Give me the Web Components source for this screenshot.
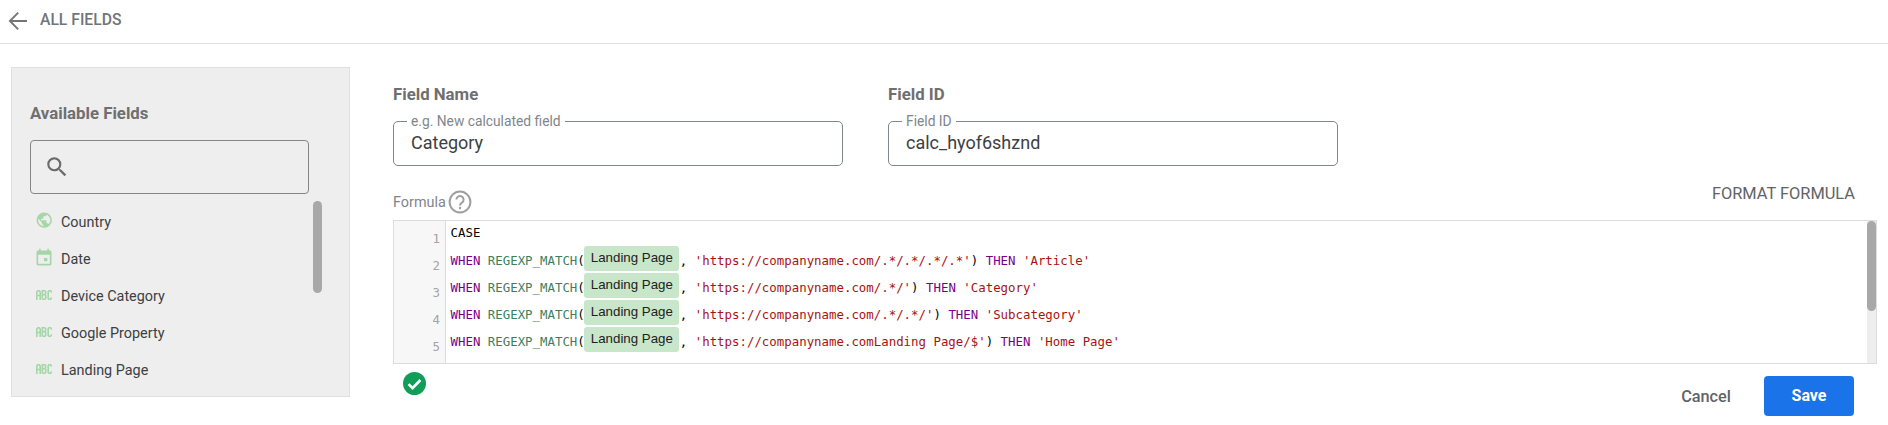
<!DOCTYPE html>
<html><head><meta charset="utf-8">
<style>
html,body{margin:0;padding:0;background:#fff;overflow:hidden}
body{width:1888px;height:425px;font-family:Roboto,sans-serif}
</style></head><body>
<app-topbar>ALL FIELDS</app-topbar>
<app-main>
  <fields-panel slot="left"></fields-panel>
  <field-editor slot="right"></field-editor>
</app-main>
<script>
function def(name,html){
  customElements.define(name,class extends HTMLElement{
    connectedCallback(){
      if(this.shadowRoot)return;
      const s=this.attachShadow({mode:'open'});
      s.innerHTML=typeof html==='function'?html(this):html;
    }
  });
}
def('app-topbar',`<style>
:host{display:flex;align-items:center;height:43px;border-bottom:1px solid #e0e0e0;color:#70757a;font:500 15.7px/38px Roboto,sans-serif}
svg{margin-left:8px;margin-right:12px;display:block;margin-top:-1px}
.t{display:block;margin-top:-4px}
</style><svg width="20" height="20" viewBox="0 0 20 20"><path d="M19 10H2.5M10.2 1.6 1.9 10l8.3 8.4" fill="none" stroke="#757575" stroke-width="1.9"/></svg><span class="t"><slot></slot></span>`);
def('app-main',`<style>
:host{display:flex;padding-top:23px;align-items:flex-start}
::slotted([slot=left]){margin-left:11px}
::slotted([slot=right]){margin-left:43px}
</style><slot name="left"></slot><slot name="right"></slot>`);
const globe=`<svg width="18.4" height="18.4" viewBox="0 0 24 24" style="margin-left:-1.5px"><path fill="#a5d6a7" d="M12 2a10 10 0 1 0 0 20 10 10 0 0 0 0-20zm-1 17.93A8 8 0 0 1 4 12c0-.62.08-1.21.21-1.79L9 15v1a2 2 0 0 0 2 2v1.93zm6.9-2.54A2 2 0 0 0 16 16h-1v-3a1 1 0 0 0-1-1H8v-2h2a1 1 0 0 0 1-1V7h2a2 2 0 0 0 2-2v-.41A8 8 0 0 1 17.9 17.39z"/></svg>`;
const cal=`<svg width="20" height="20" viewBox="0 0 24 24" style="margin-left:-2.5px"><path fill="#a5d6a7" d="M16 12h-4v4h4v-4zM16 1v2H8V1H6v2H5a2 2 0 0 0-2 2v14a2 2 0 0 0 2 2h14a2 2 0 0 0 2-2V5a2 2 0 0 0-2-2h-1V1h-2zm3 18H5V8h14v11z"/></svg>`;
const abc=`<svg width="16" height="10" viewBox="0 0 16 10"><g fill="none" stroke="#a5d6a7" stroke-width="1.6"><path d="M.8 10V2L1.8.8h1.4L4.2 2v8M.8 5.5h3.4"/><path d="M6.3 9.2V.8h2.4l.9.9v2l-.8.9H6.3M8.8 4.6l.9.9v2.8l-.9.9H6.3"/><path d="M15.4 2.8V1.7L14.6.8h-1.5l-.9.9v6.6l.9.9h1.5l.8-.9V7.2"/></g></svg>`;
def('field-item',h=>`<style>
:host{display:flex;align-items:center;height:37px;font:14.4px Roboto,sans-serif;color:#3c4043}
.i{width:25px;flex:none;display:flex;align-items:center;height:20px;margin-top:-3px}
svg{display:block;flex:none}
</style><span class="i">${{globe,cal,abc}[h.getAttribute('icon')]}</span><slot></slot>`);
def('fields-panel',`<style>
:host{display:block;width:337px;height:328px;background:#eee;border:1px solid #e0e0e0;position:relative}
h3{margin:0;padding:36px 0 0 18px;font:700 16.8px/18px Roboto,sans-serif;color:#6f6f6f}
.search{margin:18px 0 0 18px;width:277px;height:52px;border:1px solid #858585;border-radius:4px;display:flex;align-items:center}
.search svg{margin-left:13px;display:block}
.list{padding:9.5px 0 0 24px}
.sb{position:absolute;left:301px;top:133px;width:9px;height:92px;border-radius:5px;background:#a8a8a8}
</style><h3>Available Fields</h3>
<div class="search"><svg width="26" height="26" viewBox="0 0 24 24"><path fill="#6b6b6b" d="M15.5 14h-.79l-.28-.27A6.47 6.47 0 0 0 16 9.5 6.5 6.5 0 1 0 9.5 16c1.61 0 3.09-.59 4.23-1.57l.27.28v.79l5 4.99L20.49 19l-4.99-5zm-6 0C7.01 14 5 11.99 5 9.5S7.01 5 9.5 5 14 7.01 14 9.5 11.99 14 9.5 14z"/></svg></div>
<div class="list">
<field-item icon="globe">Country</field-item>
<field-item icon="cal">Date</field-item>
<field-item icon="abc">Device Category</field-item>
<field-item icon="abc">Google Property</field-item>
<field-item icon="abc">Landing Page</field-item>
</div><div class="sb"></div>`);
def('outlined-field',h=>`<style>
:host{display:block;position:relative;width:448px;height:43px;border:1px solid #80868b;border-radius:5px;font:18px Roboto,sans-serif;color:#3c4043}
.l{position:absolute;left:13px;top:-8px;padding:0 4px;background:#fff;font-size:13.8px;line-height:14px;color:#80868b}
.v{position:absolute;left:17px;top:0;line-height:42px}
</style><span class="l">${h.getAttribute('label')}</span><span class="v"><slot></slot></span>`);
def('field-chip',`<style>
:host{display:inline-block;height:25px;width:95px;margin:0 1px 0 -1px;box-sizing:border-box;padding-left:7px;background:#c8e6c9;border-radius:3px;font:13.3px/24px "Liberation Sans",Arial,sans-serif;color:#212121;vertical-align:top}
</style><slot></slot>`);
def('code-line',`<style>
:host{display:block;height:27px;line-height:29px;white-space:pre}
:host([first]){height:25px;line-height:23px}
</style><slot></slot>`);
const K=t=>`<span style="color:#770088">${t}</span>`,F=t=>`<span style="color:#3d7f5c">${t}</span>`,S=t=>`<span style="color:#aa1111">${t}</span>`;
const line=(u,r)=>`<code-line>${K('WHEN')} ${F('REGEXP_MATCH')}(<field-chip>Landing Page</field-chip>, ${S("'"+u+"'")}) ${K('THEN')} ${S("'"+r+"'")}</code-line>`;
def('formula-editor',`<style>
:host{display:flex;position:relative;width:1482px;height:142px;border:1px solid #dcdcdc;overflow:hidden;font:12.4px/27px "DejaVu Sans Mono",monospace;color:#000}
.g{flex:none;width:46px;padding-right:5px;padding-top:4px;background:#f7f7f7;border-right:1px solid #ddd;text-align:right;color:#a4a4a4}
.g div{height:27px;line-height:27px}
.c{padding-left:4.5px;flex:1;min-width:0}
.t{position:absolute;right:0;top:0;bottom:0;width:9px;background:#eee}
.th{position:absolute;right:0;top:0;height:90px;width:9px;background:#a8a8a8;border-radius:5px}
</style><div class="g"><div>1</div><div>2</div><div>3</div><div>4</div><div>5</div><div>6</div></div>
<div class="c"><code-line first>CASE</code-line>
${line('https://companyname.com/.*/.*/.*/.*','Article')}
${line('https://companyname.com/.*/','Category')}
${line('https://companyname.com/.*/.*/','Subcategory')}
${line('https://companyname.comLanding Page/$','Home Page')}
<code-line>${K('ELSE')} ${S("'Other'")}</code-line></div>
<div class="t"><div class="th"></div></div>`);
def('field-editor',`<style>
:host{display:block;width:1484px;font-family:Roboto,sans-serif;position:relative}
.row{display:flex;gap:45px;padding-top:18px}
h4{margin:0 0 18px;font:700 16.8px/18px Roboto,sans-serif;color:#6f6f6f}
.fh{display:flex;align-items:flex-start;justify-content:space-between;height:54px}
.fl{display:flex;align-items:center;color:#80868b;font-size:14.4px;line-height:23px;gap:2px;margin-top:24px}
.ff{font:400 16.4px/20px Roboto,sans-serif;color:#5f6368;margin:18px 22px 0 0}
.foot{display:flex;align-items:flex-start;justify-content:space-between;height:61px}
.ok{margin:8px 0 0 10px;display:block}
.btns{display:flex;align-items:center;gap:33px;margin:12px 23px 0 0}
.cancel{font:500 16.3px Roboto,sans-serif;color:#5f6368}
.save{width:90px;height:40px;background:#1a73e8;border-radius:4px;color:#fff;font:700 16px/40px Roboto,sans-serif;text-align:center}
</style><div class="row">
<div><h4>Field Name</h4><outlined-field label="e.g. New calculated field">Category</outlined-field></div>
<div><h4>Field ID</h4><outlined-field label="Field ID">calc_hyof6shznd</outlined-field></div>
</div>
<div class="fh"><span class="fl">Formula<svg width="24" height="24" viewBox="0 0 24 24"><circle cx="12" cy="12" r="10.4" fill="none" stroke="#9e9e9e" stroke-width="2"/><path d="M8.4 9.6a3.6 3.6 0 1 1 5.7 2.9c-1.3.9-2.1 1.6-2.1 3.1" fill="none" stroke="#9e9e9e" stroke-width="2"/><circle cx="12" cy="18" r="1.2" fill="#9e9e9e"/></svg></span><span class="ff">FORMAT FORMULA</span></div>
<formula-editor></formula-editor>
<div class="foot"><svg class="ok" width="23" height="23" viewBox="0 0 24 24"><circle cx="12" cy="12" r="12" fill="#0f9d58"/><path d="M5.8 12.6l4.2 4.2 8.2-8.4" fill="none" stroke="#fff" stroke-width="2.8"/></svg>
<div class="btns"><span class="cancel">Cancel</span><span class="save">Save</span></div></div>`);
</script>
</body></html>
